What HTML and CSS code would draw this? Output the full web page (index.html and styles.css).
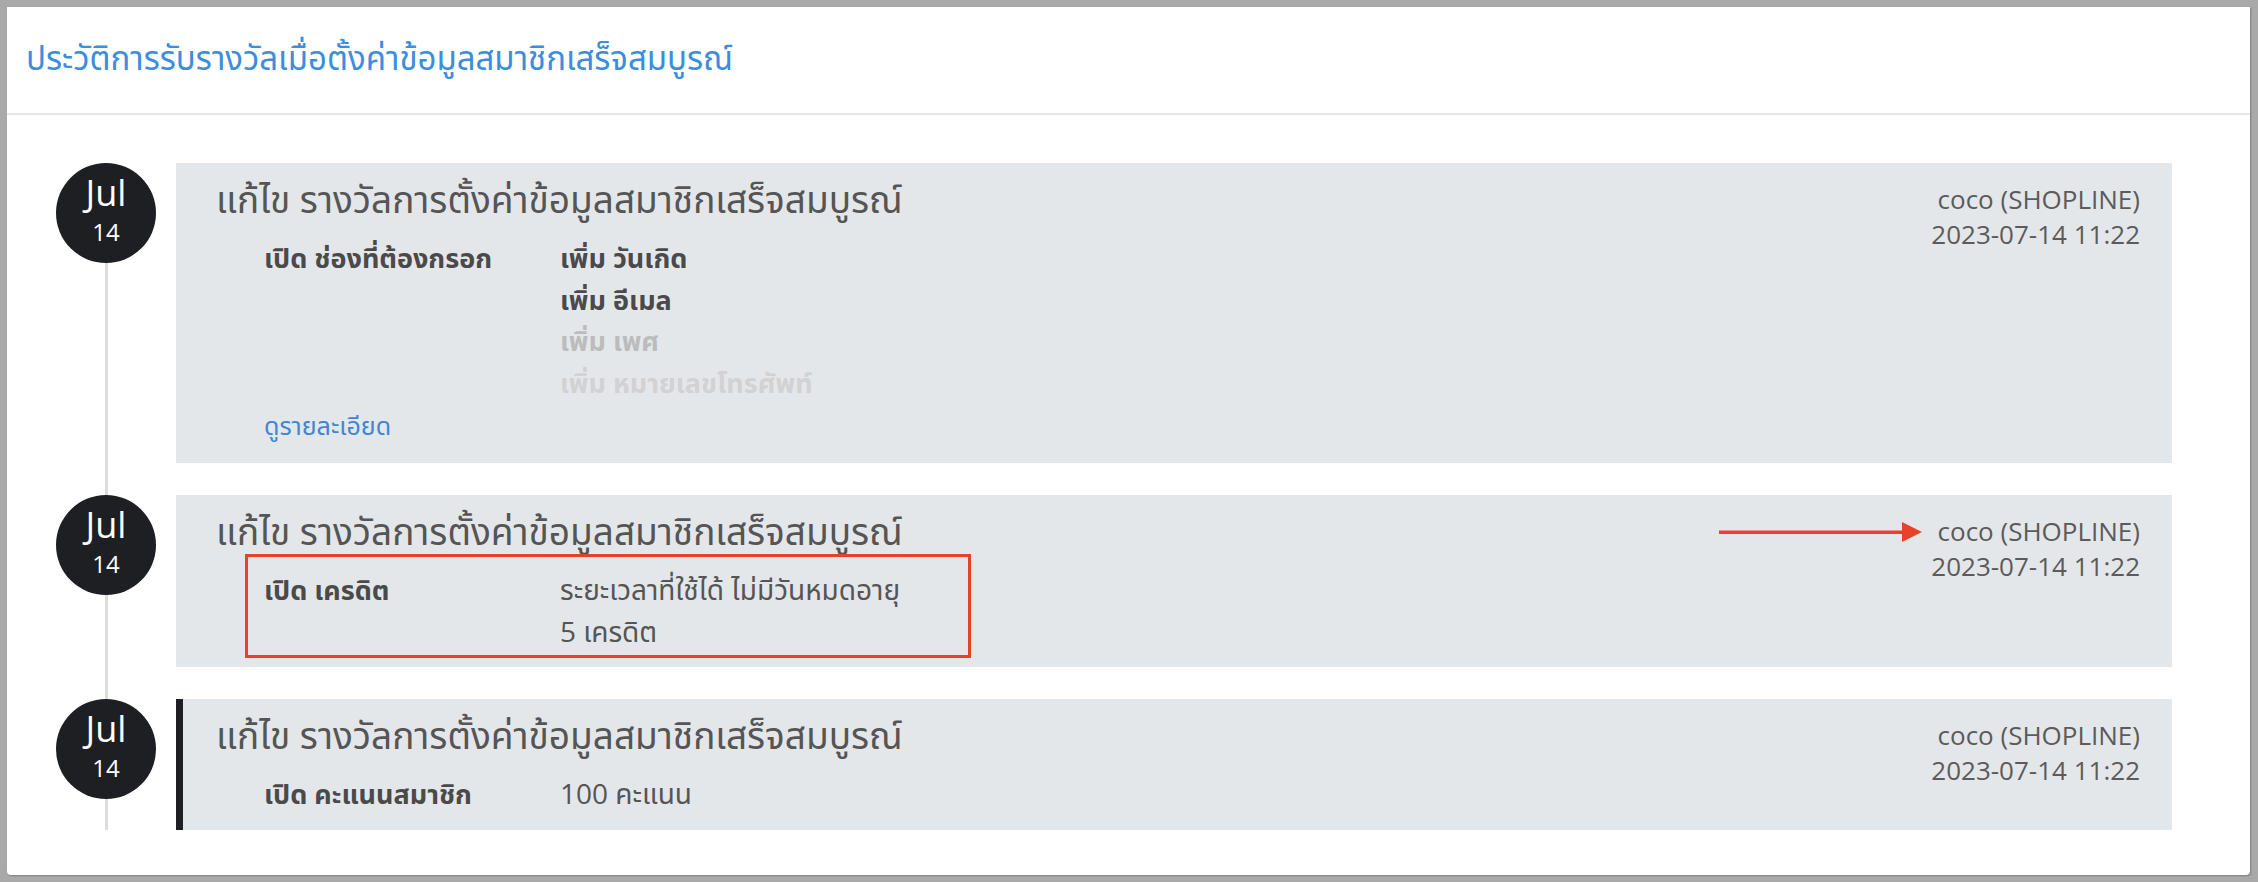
FILE: index.html
```html
<!DOCTYPE html>
<html lang="th">
<head>
  <meta charset="UTF-8" />
  <meta name="viewport" content="width=device-width, initial-scale=1.0"/>
  <title>ประวัติการรับรางวัล</title>
  <link rel="stylesheet" href="styles.css">
</head>
<body>

  <div class="panel">
    <div class="panel-header">
      <h1 class="panel-title">ประวัติการรับรางวัลเมื่อตั้งค่าข้อมูลสมาชิกเสร็จสมบูรณ์</h1>
    </div>

    <div class="panel-body">
      <div class="timeline">

        <div class="timeline-item">
          <div class="date-badge"><span class="month">Jul</span><span class="day">14</span></div>
          <div class="event-card">
            <div class="event-main">
              <div class="event-title">แก้ไข รางวัลการตั้งค่าข้อมูลสมาชิกเสร็จสมบูรณ์</div>
              <div class="change-row">
                <div class="change-label">เปิด ช่องที่ต้องกรอก</div>
                <div class="change-values">
                  <div class="value on">เพิ่ม วันเกิด</div>
                  <div class="value on">เพิ่ม อีเมล</div>
                  <div class="value off">เพิ่ม เพศ</div>
                  <div class="value off faint">เพิ่ม หมายเลขโทรศัพท์</div>
                </div>
              </div>
              <a href="#" class="detail-link">ดูรายละเอียด</a>
            </div>
            <div class="event-meta">
              <div>coco (SHOPLINE)</div>
              <div>2023-07-14 11:22</div>
            </div>
          </div>
        </div>

        <div class="timeline-item">
          <div class="date-badge"><span class="month">Jul</span><span class="day">14</span></div>
          <div class="event-card">
            <div class="event-main">
              <div class="event-title">แก้ไข รางวัลการตั้งค่าข้อมูลสมาชิกเสร็จสมบูรณ์</div>
              <div class="change-row">
                <div class="change-label">เปิด เครดิต</div>
                <div class="change-values">
                  <div class="value">ระยะเวลาที่ใช้ได้ ไม่มีวันหมดอายุ</div>
                  <div class="value">5 เครดิต</div>
                </div>
              </div>
            </div>
            <div class="event-meta">
              <div>coco (SHOPLINE)</div>
              <div>2023-07-14 11:22</div>
            </div>
            <div class="mark-box"></div>
            <svg class="mark-arrow" width="203" height="20" viewBox="0 0 203 20">
              <rect x="0" y="8.5" width="186" height="3.5" fill="#e8432a"/>
              <polygon points="183,0 203,10 183,20" fill="#e8432a"/>
            </svg>
          </div>
        </div>

        <div class="timeline-item">
          <div class="date-badge"><span class="month">Jul</span><span class="day">14</span></div>
          <div class="event-card current">
            <div class="event-main">
              <div class="event-title">แก้ไข รางวัลการตั้งค่าข้อมูลสมาชิกเสร็จสมบูรณ์</div>
              <div class="change-row">
                <div class="change-label">เปิด คะแนนสมาชิก</div>
                <div class="change-values">
                  <div class="value">100 คะแนน</div>
                </div>
              </div>
            </div>
            <div class="event-meta">
              <div>coco (SHOPLINE)</div>
              <div>2023-07-14 11:22</div>
            </div>
          </div>
        </div>

      </div>
    </div>
  </div>

</body>
</html>
```

FILE: styles.css
```css
body {
  margin: 0;
  padding: 7px 8px 9px 7px;
  background-color: #a9a9a9;
  font-family: "Open Sans", "Noto Sans Thai", "Noto Sans", sans-serif;
  color: #555;
}

.panel {
  background-color: #fff;
  border-radius: 0 0 4px 4px;
  box-shadow: 1px 1px 2px rgba(0,0,0,0.25);
}

.panel-header {
  height: 106px;
  display: flex;
  align-items: center;
  padding-left: 19px;
  border-bottom: 2px solid #e6e6e6;
}

.panel-title {
  margin: 0;
  font-size: 33px;
  font-weight: normal;
  color: #3b8edb;
}

.panel-body {
  padding: 48px 78px 45px 49px;
}

.timeline {
  position: relative;
}

.timeline::before {
  content: "";
  position: absolute;
  left: 49px;
  top: 50px;
  bottom: 0;
  width: 3px;
  background-color: #dcdcdc;
}

.timeline-item {
  display: flex;
  gap: 20px;
  margin-bottom: 32px;
}

.timeline-item:last-child {
  margin-bottom: 0;
}

.date-badge {
  position: relative;
  flex: 0 0 100px;
  height: 100px;
  border-radius: 50%;
  background-color: #1e1f23;
  color: #fff;
  display: flex;
  flex-direction: column;
  align-items: center;
  padding-top: 12px;
  box-sizing: border-box;
}

.date-badge .month {
  font-size: 36px;
  line-height: 36px;
}

.date-badge .day {
  margin-top: 8px;
  font-size: 24px;
  line-height: 26px;
}

.event-card {
  position: relative;
  flex: 1;
  display: flex;
  justify-content: space-between;
  background-color: #e4e7ea;
  padding: 14px 32px 15px 40px;
}

.event-card.current {
  border-left: 7px solid #1e1f23;
  padding-left: 33px;
}

.event-title {
  font-size: 37px;
  line-height: 44px;
  color: #555;
}

.change-row {
  display: flex;
  margin: 16px 0 0 48px;
  font-size: 27px;
  line-height: 41.5px;
}

.change-label {
  width: 296px;
  font-weight: bold;
  color: #4a4a4a;
}

.value {
  font-size: 28px;
  color: #555;
}

.value.on {
  font-size: 27px;
  font-weight: bold;
  color: #4a4a4a;
}

.value.off {
  font-size: 27px;
  font-weight: bold;
  color: #bcbcbc;
}

.value.faint {
  color: #d2d2d2;
}

.detail-link {
  display: block;
  margin: 2px 0 3px 48px;
  font-size: 25px;
  line-height: 40px;
  color: #3f86d3;
  text-decoration: none;
}

.event-meta {
  padding-top: 5px;
  text-align: right;
  font-size: 26px;
  line-height: 35px;
  color: #5b5b5b;
}

.mark-box {
  position: absolute;
  left: 69px;
  top: 59px;
  width: 726px;
  height: 104px;
  border: 3px solid #e8432a;
  box-sizing: border-box;
}

.mark-arrow {
  position: absolute;
  left: 1543px;
  top: 27px;
}
```
